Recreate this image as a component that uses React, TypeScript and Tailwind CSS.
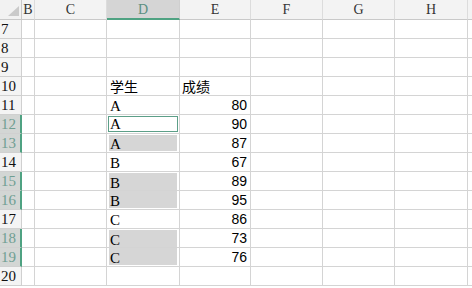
import React from "react"

const cols = ["B", "C", "D", "E", "F", "G", "H", ""]

type Row = { n: number; d?: string; e?: string; sel?: "active" | "single" | "top" | "bottom" }

const rows: Row[] = [
  { n: 7 },
  { n: 8 },
  { n: 9 },
  { n: 10, d: "学生", e: "成绩" },
  { n: 11, d: "A", e: "80" },
  { n: 12, d: "A", e: "90", sel: "active" },
  { n: 13, d: "A", e: "87", sel: "single" },
  { n: 14, d: "B", e: "67" },
  { n: 15, d: "B", e: "89", sel: "top" },
  { n: 16, d: "B", e: "95", sel: "bottom" },
  { n: 17, d: "C", e: "86" },
  { n: 18, d: "C", e: "73", sel: "top" },
  { n: 19, d: "C", e: "76", sel: "bottom" },
  { n: 20 },
]

const serif = "font-['Liberation_Serif','Noto_Sans_CJK_SC',serif]"
const line = "border-r border-b border-[#d4d4d4]"

function DCell({ row }: { row: Row }) {
  const isCjk = row.n === 10
  const text = (
    <span className={isCjk ? "font-['Noto_Sans_CJK_SC',sans-serif] text-[14px] leading-[16px] text-black" : `${serif} text-[15px] leading-[14px] text-black`}>
      {row.d}
    </span>
  )
  if (row.sel === "active") {
    return (
      <div className={`${line} flex`}>
        <div className="m-[1px] flex flex-1 items-end border-[1.5px] border-[#5c9f88] pl-[1px]">{text}</div>
      </div>
    )
  }
  if (row.sel) {
    const inset =
      row.sel === "single" ? "mt-[1px] mb-[1px]" : row.sel === "top" ? "mt-[1px]" : "mb-[1px]"
    return (
      <div className={`${line} flex`}>
        <div className={`mx-[2px] ${inset} flex flex-1 items-end bg-[#d6d6d6] pl-[1px]`}>{text}</div>
      </div>
    )
  }
  return <div className={`${line} flex items-end pb-[1px] pl-[3px]`}>{row.d ? text : null}</div>
}

export default function App() {
  return (
    <div className="h-[288px] w-[472px] overflow-hidden bg-white">
      <div className="grid grid-cols-[22px_13px_72px_73px_71px_72px_72px_73px_10px] grid-rows-[20px_repeat(14,19px)]">
        {/* corner */}
        <div className="relative border-r border-b border-[#c9c9c9] bg-[#f2f2f2]">
          <svg className="absolute right-[2px] bottom-[3px]" width="11" height="10" viewBox="0 0 11 10">
            <polygon points="11,0 11,10 0,10" fill="#cacaca" />
          </svg>
        </div>
        {cols.map((c) =>
          c === "D" ? (
            <div
              key={c}
              className={`flex items-center justify-center border-r border-b-2 border-r-[#cfcfcf] border-b-[#4fa282] bg-[#d5d5d5] text-[14px] text-[#5b8f82] ${serif}`}
            >
              {c}
            </div>
          ) : (
            <div
              key={c || "i"}
              className={`flex items-center justify-center border-r border-b border-r-[#dcdcdc] border-b-[#c9c9c9] bg-[#f3f3f3] text-[14px] text-[#333] ${serif}`}
            >
              {c}
            </div>
          )
        )}
        {rows.map((r) => (
          <React.Fragment key={r.n}>
            <div
              className={
                r.sel
                  ? `flex items-end border-r-2 border-b border-r-[#4fa282] border-b-[#d0d0d0] bg-[#d3d6d4] pl-[1px] text-[15px] leading-[18px] text-[#6f9e92] ${serif}`
                  : `flex items-end border-r border-b border-[#d0d0d0] bg-[#f4f4f4] pl-[1px] text-[15px] leading-[18px] text-[#111] ${serif}`
              }
            >
              {r.n}
            </div>
            <div className={line} />
            <div className={line} />
            <DCell row={r} />
            {r.n === 10 ? (
              <div className={`${line} flex items-end pb-[1px] pl-[2px]`}>
                <span className="font-['Noto_Sans_CJK_SC',sans-serif] text-[14px] leading-[16px] text-black">{r.e}</span>
              </div>
            ) : (
              <div className={`${line} flex items-end justify-end pr-[3px] pb-[2px]`}>
                <span className="font-['Liberation_Sans',sans-serif] text-[14px] leading-[14px] text-black">{r.e}</span>
              </div>
            )}
            <div className={line} />
            <div className={line} />
            <div className={line} />
            <div className={line} />
          </React.Fragment>
        ))}
      </div>
    </div>
  )
}
